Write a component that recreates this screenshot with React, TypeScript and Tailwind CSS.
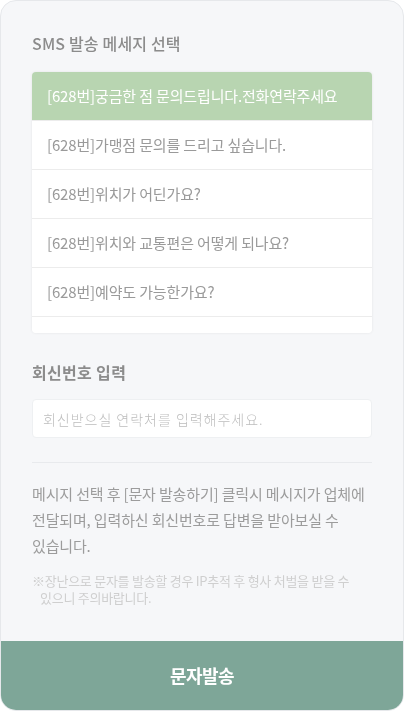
const messages = [
  '[628번]궁금한 점 문의드립니다.전화연락주세요',
  '[628번]가맹점 문의를 드리고 싶습니다.',
  '[628번]위치가 어딘가요?',
  '[628번]위치와 교통편은 어떻게 되나요?',
  '[628번]예약도 가능한가요?',
  '[628번]영업시간이 어떻게 되나요?',
]

export default function App() {
  return (
    <div className="h-[711px] w-[404px] bg-white font-['Noto_Sans_CJK_KR','Noto_Sans',sans-serif]">
      <div className="flex h-full flex-col overflow-hidden rounded-2xl border border-[#e6e8eb] bg-[#f6f7f9]">
        <div className="flex-1 px-[31px] pt-[30px]">
          {/* 메시지 선택 */}
          <h2 className="text-[16px] font-medium leading-6 tracking-[0.01em] text-[#8c8c8c]">SMS 발송 메세지 선택</h2>
          <div className="mt-[17px] h-[261px] overflow-y-scroll rounded-[4px] bg-white shadow-[0_0_3px_rgba(0,0,0,0.08)] [&::-webkit-scrollbar]:w-[4px] [&::-webkit-scrollbar-track]:bg-[#f1f1f1] [&::-webkit-scrollbar-thumb]:bg-[#dedede]">
            {messages.map((m, i) => (
              <div
                key={m}
                className={
                  i === 0
                    ? 'flex h-[49px] items-center border-b border-[#ececec] bg-[#b8d5b1] pl-[15px] text-[15px] tracking-[-0.01em] text-white'
                    : 'flex h-[49px] items-center border-b border-[#ececec] pl-[15px] text-[15px] tracking-[-0.01em] text-[#9a9a9a]'
                }
              >
                {m}
              </div>
            ))}
          </div>

          {/* 회신번호 */}
          <h2 className="mt-[27px] text-[16px] font-bold leading-6 tracking-[0.02em] text-[#8c8c8c]">회신번호 입력</h2>
          <input
            className="mt-[15px] block h-[39px] w-full rounded-[4px] border border-[#eef0f2] bg-white px-[10px] text-[14px] font-light tracking-[0.07em] text-[#666] outline-none placeholder:text-[#bdbdbd]"
            placeholder="회신받으실 연락처를 입력해주세요."
          />

          <div className="mt-[24px] border-t border-[#e8eaed]" />

          <p className="mt-[18px] break-keep text-[15px] leading-[26px] tracking-[-0.01em] text-[#9c9c9c]">
            메시지 선택 후 [문자 발송하기] 클릭시 메시지가 업체에 전달되며, 입력하신 회신번호로 답변을 받아보실 수 있습니다.
          </p>
          <p className="mt-[13px] break-keep pl-[8px] -indent-[8px] text-[13px] leading-[17px] tracking-[-0.02em] text-[#cfcfcf]">
            ※장난으로 문자를 발송할 경우 IP추적 후 형사 처벌을 받을 수 있으니 주의바랍니다.
          </p>
        </div>

        <button className="h-[69px] w-full shrink-0 bg-[#7ea698] text-[18px] font-bold tracking-[-0.03em] text-white">
          문자발송
        </button>
      </div>
    </div>
  )
}
